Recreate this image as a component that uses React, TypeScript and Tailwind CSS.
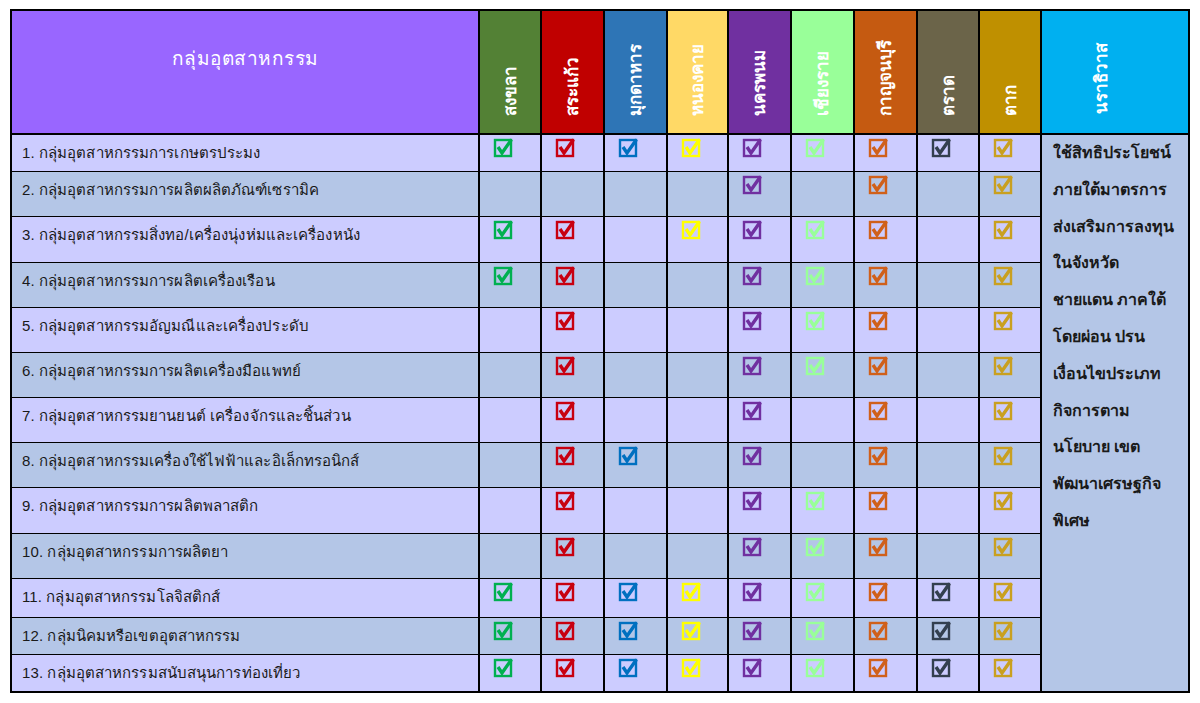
import React from "react";

type Province = { name: string; bg: string; check: string };

const provinces: Province[] = [
  { name: "สงขลา", bg: "bg-[#538135]", check: "#00b050" },
  { name: "สระแก้ว", bg: "bg-[#c00000]", check: "#c80010" },
  { name: "มุกดาหาร", bg: "bg-[#2e75b6]", check: "#0070c0" },
  { name: "หนองคาย", bg: "bg-[#ffd966]", check: "#ffff00" },
  { name: "นครพนม", bg: "bg-[#7030a0]", check: "#7030a0" },
  { name: "เชียงราย", bg: "bg-[#99ff99]", check: "#99ff99" },
  { name: "กาญจนบุรี", bg: "bg-[#c55a11]", check: "#d0601a" },
  { name: "ตราด", bg: "bg-[#6b6449]", check: "#333f4f" },
  { name: "ตาก", bg: "bg-[#bf9000]", check: "#c9a020" },
];

const colWidths = [62, 63, 63, 61, 63, 63, 63, 62, 62];

// 1 = checked, in province order above
const rows: { label: string; h: number; marks: number[] }[] = [
  { label: "1. กลุ่มอุตสาหกรรมการเกษตรประมง", h: 37, marks: [1, 1, 1, 1, 1, 1, 1, 1, 1] },
  { label: "2. กลุ่มอุตสาหกรรมการผลิตผลิตภัณฑ์เซรามิค", h: 45, marks: [0, 0, 0, 0, 1, 0, 1, 0, 1] },
  { label: "3. กลุ่มอุตสาหกรรมสิ่งทอ/เครื่องนุ่งห่มและเครื่องหนัง", h: 46, marks: [1, 1, 0, 1, 1, 1, 1, 0, 1] },
  { label: "4. กลุ่มอุตสาหกรรมการผลิตเครื่องเรือน", h: 45, marks: [1, 1, 0, 0, 1, 1, 1, 0, 1] },
  { label: "5. กลุ่มอุตสาหกรรมอัญมณีและเครื่องประดับ", h: 45, marks: [0, 1, 0, 0, 1, 1, 1, 0, 1] },
  { label: "6. กลุ่มอุตสาหกรรมการผลิตเครื่องมือแพทย์", h: 45, marks: [0, 1, 0, 0, 1, 1, 1, 0, 1] },
  { label: "7. กลุ่มอุตสาหกรรมยานยนต์ เครื่องจักรและชิ้นส่วน", h: 45, marks: [0, 1, 0, 0, 1, 0, 1, 0, 1] },
  { label: "8. กลุ่มอุตสาหกรรมเครื่องใช้ไฟฟ้าและอิเล็กทรอนิกส์", h: 45, marks: [0, 1, 1, 0, 1, 0, 1, 0, 1] },
  { label: "9. กลุ่มอุตสาหกรรมการผลิตพลาสติก", h: 46, marks: [0, 1, 0, 0, 1, 1, 1, 0, 1] },
  { label: "10. กลุ่มอุตสาหกรรมการผลิตยา", h: 45, marks: [0, 1, 0, 0, 1, 1, 1, 0, 1] },
  { label: "11. กลุ่มอุตสาหกรรมโลจิสติกส์", h: 39, marks: [1, 1, 1, 1, 1, 1, 1, 1, 1] },
  { label: "12. กลุ่มนิคมหรือเขตอุตสาหกรรม", h: 36, marks: [1, 1, 1, 1, 1, 1, 1, 1, 1] },
  { label: "13. กลุ่มอุตสาหกรรมสนับสนุนการท่องเที่ยว", h: 37, marks: [1, 1, 1, 1, 1, 1, 1, 1, 1] },
];

const noteLines = [
  "ใช้สิทธิประโยชน์",
  "ภายใต้มาตรการ",
  "ส่งเสริมการลงทุน",
  "ในจังหวัด",
  "ชายแดน ภาคใต้",
  "โดยผ่อน ปรน",
  "เงื่อนไขประเภท",
  "กิจการตาม",
  "นโยบาย เขต",
  "พัฒนาเศรษฐกิจ",
  "พิเศษ",
];

function CheckBox({ color }: { color: string }) {
  return (
    <svg width="21" height="21" viewBox="0 0 21 21" className="block">
      <rect x="2" y="3" width="16" height="16" fill="none" stroke={color} strokeWidth="2.4" />
      <path d="M5 10 L9 16 L18.5 2.5" fill="none" stroke={color} strokeWidth="3.4" strokeLinejoin="miter" />
    </svg>
  );
}

export default function App() {
  return (
    <main
      className="w-[1200px] h-[703px] bg-white pl-[10px] pt-[9px]"
      style={{ fontFamily: '"Liberation Sans", "DejaVu Sans", "Noto Sans", sans-serif' }}
    >
      <table className="table-fixed border-collapse border-2 border-black w-[1178px]">
        <colgroup>
          <col className="w-[468px]" />
          {colWidths.map((w, i) => (
            <col key={i} style={{ width: w }} />
          ))}
          <col className="w-[148px]" />
        </colgroup>
        <thead>
          <tr className="h-[124px]">
            <th className="bg-[#9966ff] border-2 border-black text-white text-[19px] font-normal tracking-[0.5px] align-middle pb-[26px]">
              กลุ่มอุตสาหกรรม
            </th>
            {provinces.map((p) => (
              <th key={p.name} className={`${p.bg} border-2 border-black align-bottom pb-[10px] p-0`}>
                <span className="inline-block [writing-mode:vertical-rl] rotate-180 text-white text-[17px] font-bold leading-none">
                  {p.name}
                </span>
              </th>
            ))}
            <th className="bg-[#00b0f0] border-2 border-black align-bottom pb-[12px] pr-[28px]">
              <span className="inline-block [writing-mode:vertical-rl] rotate-180 text-white text-[17px] font-bold leading-none">
                นราธิวาส
              </span>
            </th>
          </tr>
        </thead>
        <tbody>
          {rows.map((r, ri) => (
            <tr key={r.label} style={{ height: r.h }} className={ri % 2 === 0 ? "bg-[#ccccff]" : "bg-[#b4c6e7]"}>
              <td className="border-y-[1.5px] border-x-2 border-black align-top pl-[10px] text-[15px] tracking-[0.1px] leading-[36px] text-[#1a1a1a] whitespace-nowrap">
                {r.label}
              </td>
              {r.marks.map((m, ci) => (
                <td key={ci} className="border-y-[1.5px] border-x-2 border-black align-top pl-[13px] pt-[2px]">
                  {m === 1 && <CheckBox color={provinces[ci].check} />}
                </td>
              ))}
              {ri === 0 && (
                <td
                  rowSpan={rows.length}
                  className="bg-[#b4c6e7] border-2 border-black align-top pl-[11px] text-[16px] font-bold leading-[36.8px] text-[#1a1a1a] whitespace-nowrap"
                >
                  {noteLines.map((l) => (
                    <div key={l}>{l}</div>
                  ))}
                </td>
              )}
            </tr>
          ))}
        </tbody>
      </table>
    </main>
  );
}
